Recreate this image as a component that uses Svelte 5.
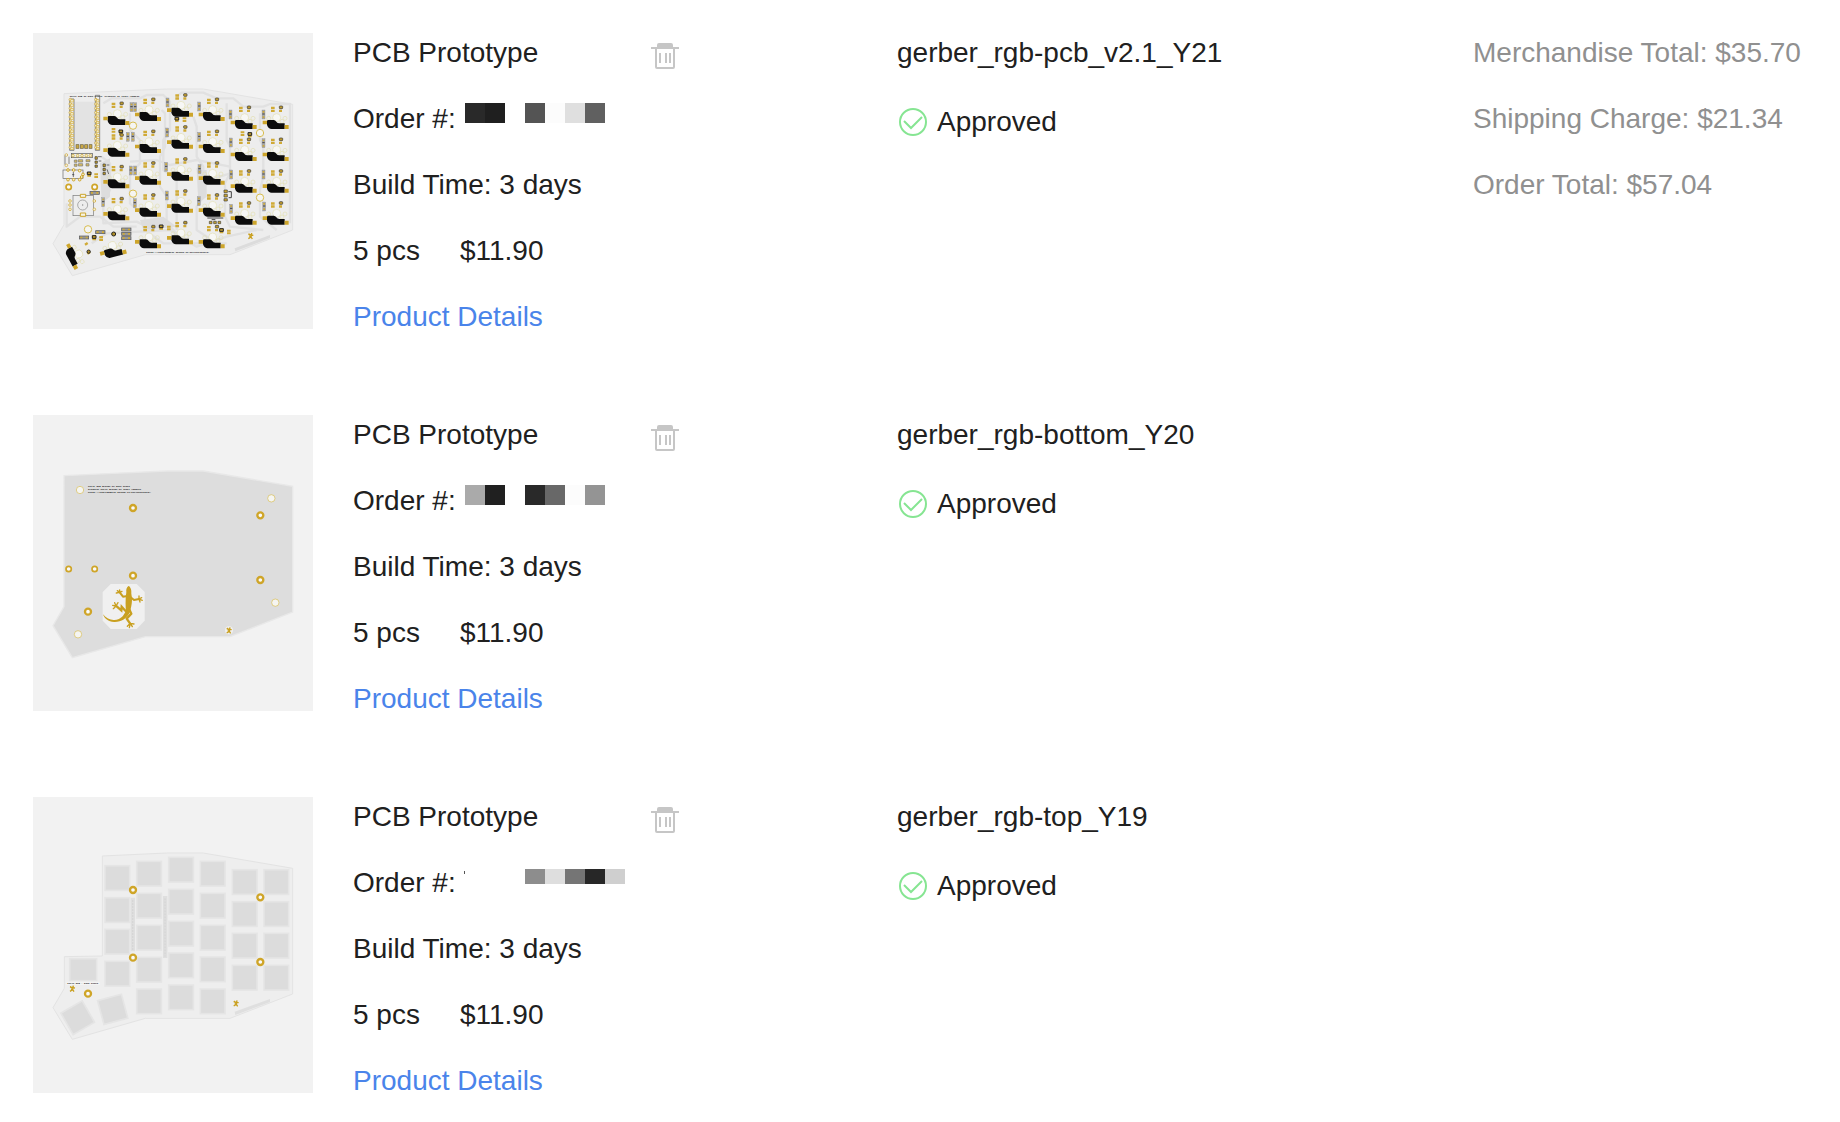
<script>
  const items = [
    {
      board: 'main',
      file: 'gerber_rgb-pcb_v2.1_Y21',
      mask: ['#292929', '#1f1f1f', '#ffffff', '#545454', '#fcfcfc', '#dfdfdf', '#606060'],
    },
    {
      board: 'bottom',
      file: 'gerber_rgb-bottom_Y20',
      mask: ['#aaaaaa', '#202020', '#ffffff', '#292929', '#686868', '#fcfcfc', '#949494'],
    },
    {
      board: 'top',
      file: 'gerber_rgb-top_Y19',
      short: true,
      mask: ['#ffffff', '#ffffff', '#ffffff', '#8d8d8d', '#dedede', '#757575', '#272727', '#cfcfcf'],
    },
  ];

  const totals = [
    ['Merchandise Total', '$35.70'],
    ['Shipping Charge', '$21.34'],
    ['Order Total', '$57.04'],
  ];

  const OUTLINE = 'M102 197L250 190L410 183H520L788 229V606L600 680H346L127 743L69 647L102 590Z';

  // Hot-swap sockets: one [x, y] per key, by column
  const sockets = [
    [233, [258, 353, 448, 544]],
    [328, [246, 342, 437, 533, 628]],
    [424, [233, 329, 425, 521, 616]],
    [519, [246, 342, 437, 533, 628]],
    [615, [270, 366, 461, 557]],
    [711, [270, 366, 461, 557]],
  ].flatMap(([x, ys]) => ys.map((y) => [x, y]));

  const keys = [
    [225, [227, 323, 418, 514]],
    [320, [214, 310, 406, 502, 597]],
    [416, [202, 298, 394, 489, 585]],
    [511, [214, 310, 406, 501, 597]],
    [607, [239, 335, 430, 526]],
    [702, [239, 335, 430, 526]],
  ].flatMap(([x, ys]) => ys.map((y) => [x, y]));

  // Vertical diode footprints
  const diodes = [
    [300, 218], [311, 218], [408, 204], [503, 216], [597, 240], [696, 240],
    [289, 307], [304, 307], [407, 294], [503, 307], [598, 324], [696, 326],
    [298, 408], [311, 408], [404, 397], [504, 404], [599, 420], [696, 420],
    [215, 503], [310, 506], [406, 483], [502, 500], [599, 523], [698, 516],
  ];
  const flatDiodes = [[180, 484], [197, 602], [148, 618], [275, 594], [275, 607], [275, 620]];
  const pads = [
    [267, 300], [245, 294], [435, 262], [458, 262], [654, 308], [632, 304],
    [172, 426], [193, 430], [187, 617], [208, 619], [388, 585], [411, 587],
    [569, 596], [591, 599],
  ];
  const pinRow = Array.from({ length: 12 }, (_, i) => 209 + i * 13);

  const traces = [
    'M440 200L455 188H520L560 205H610L640 230H700L720 222H780V580',
    'M220 220L245 205H330L350 195H400L420 215V300L400 330V420L440 450V600',
    'M300 250V300L330 330V400L300 430V520L345 560V600L400 640H590',
    'M395 240L405 250V350L390 380V470L410 500V580L440 610',
    'M490 260L500 290V380L520 410V500L500 530V600L560 640',
    'M590 220V330L600 350V430L585 460V560L600 590L700 600',
    'M690 250V330L700 350V440L690 480V560L740 600',
    'M215 380L240 400V480L220 510V580L320 575L370 600',
    'M110 520V590L150 560H210L250 590H320',
    'M500 415L540 450L600 430M300 395L380 390L420 405L500 390L600 410',
    'M185 640L230 610L420 600L500 650L590 620L680 600',
  ];
</script>

{#snippet ring(x, y, r = 9, w = 7)}
  <circle cx={x} cy={y} {r} fill="#fafafa" stroke="#cfa528" stroke-width={w} />
{/snippet}

{#snippet thinRing(x, y, w = 2)}
  <circle cx={x} cy={y} r="11" fill="#f5f5f2" stroke="#d8bd50" stroke-width={w} />
{/snippet}

{#snippet gecko()}
  <g fill="none" stroke="#c9a020" stroke-linecap="round" stroke-linejoin="round">
    <path d="M292 558L279 560L269 547" stroke-width="6" />
    <path d="M269 547L259 549M269 547L262 542M269 547L269 540M269 547L276 544" stroke-width="4" />
    <path d="M300 560L312 570L327 567" stroke-width="6" />
    <path d="M327 567L327 558M327 567L335 563M327 567L337 571M327 567L330 576" stroke-width="4" />
    <path d="M294 604L286 602L275 590L274 601L260 589" stroke-width="7" stroke-linejoin="miter" />
    <path d="M258 588L248 586M258 588L250 596M258 588L254 578M258 588L264 578" stroke-width="4" />
    <path d="M297 596L304 611L290 626L300 640" stroke-width="7" />
    <path d="M301 640L292 649M301 640L298 653M301 640L307 650M301 640L312 642" stroke-width="4" />
  </g>
  <path
    d="M296 528C301 530 305 540 304 546C303 550 306 558 306 570C306 584 302 596 300 606C290 626 273 637 252 636C235 635 223 626 219 613C229 626 241 631 254 630C270 629 279 621 287 604C288 596 286 584 287 570C287 558 289 550 289 545C288 537 292 529 296 528Z"
    fill="#c9a020"
  />
{/snippet}

{#snippet smallGecko(x, y)}
  <g transform="translate({x} {y})" fill="none" stroke="#c9a020" stroke-width="4">
    <path d="M3 -9L1 3L-7 8M-7 -5L2 -3L8 -2M-4 1L1 3L5 9M-6 -7L-2 -2" />
  </g>
{/snippet}

{#snippet socket()}
  <g fill="none" stroke="#e3dfb4" stroke-width="2">
    <circle cx="29" cy="-7" r="12" fill="#f7f7f5" />
    <circle cx="5" cy="-5" r="6" />
    <circle cx="54" cy="-5" r="6" />
    <circle cx="45" cy="4" r="6" />
  </g>
  <path d="M0 4Q0 0 4 0H20Q25 0 28 5Q31 10 37 10H53V27H14Q4 27 0 15Z" fill="#0c0c0c" />
  <path d="M-13 2H0V13H-13ZM53 15H65V27H53Z" fill="#cda52b" />
{/snippet}

{#snippet led()}
  <path d="M12 -40H23V-33H12ZM12 -31H23V-24H12ZM36 -31H45V-24H36Z" fill="#d0aa36" />
  <rect x="37" y="-42" width="10" height="8" rx="2" fill="#c09c30" stroke="#333" stroke-width="2" />
{/snippet}

{#snippet mainBoard()}
  <g transform="translate(-9 -9)">
    <path d={OUTLINE} transform="translate(0 -6)" fill="#ededed" stroke="#e3e3e3" stroke-width="3" />
    <g fill="none" stroke="#e1e1e1" stroke-width="7" stroke-linejoin="round">
      {#each traces as d}<path {d} />{/each}
    </g>
    <path d="M210 400L240 385V500L215 520ZM330 570L400 560L440 590L340 600ZM500 420H530V500L505 520Z" fill="#dddddd" />

    <text x="119" y="200" font-size="7" class="silk">Sofle RGB by Dane Evans, original by Josef Adamcik</text>

    <!-- controller header -->
    <path d="M134 215H196V342H134Z" fill="#e3e3e3" />
    <g fill="none" stroke="#555" stroke-width="2">
      <path d="M119 207H132V361H119ZM196 196H209V361H196Z" />
    </g>
    {#each pinRow as y}
      <circle cx="121" cy={y} r="4" fill="#f3efd8" stroke="#cda52b" stroke-width="2" />
      <rect x="122" y={y} width="8" height="7" fill="#f1e9c4" stroke="#d4b24a" stroke-width="2" />
      <circle cx="198" cy={y} r="4" fill="#f3efd8" stroke="#cda52b" stroke-width="2" />
      <rect x="199" y={y} width="8" height="7" fill="#f1e9c4" stroke="#d4b24a" stroke-width="2" />
    {/each}
    {#each [138, 151, 164, 177] as x}
      <rect {x} y="344" width="9" height="11" fill="#c9a743" stroke="#6e6444" stroke-width="2" />
    {/each}

    <!-- display and passives -->
    <rect x="124" y="370" width="63" height="13" fill="#eee" stroke="#555" stroke-width="2" />
    {#each [129, 143, 156, 169, 181] as x}
      <circle cx={x} cy="377" r="4" fill="#f2ecd0" stroke="#cda52b" stroke-width="2" />
    {/each}
    <path d="M105 376V404M117 380V402" stroke="#555" stroke-width="2" />
    <circle cx="109" cy="375" r="4" fill="#eee" stroke="#cda52b" stroke-width="2" />
    <circle cx="109" cy="406" r="4" fill="#eee" stroke="#cda52b" stroke-width="2" />
    <g fill="#d8bc62" stroke="#777" stroke-width="2">
      <path d="M133 390H141V397H133ZM133 402H141V409H133ZM145 389H158V396H145ZM145 401H158V408H145ZM168 389H180V395H168ZM168 401H177V408H168Z" />
    </g>
    <g fill="#cda52b" stroke="#333" stroke-width="2">
      <path d="M195 380H202V388H195ZM195 393H202V400H195ZM195 405H202V412H195ZM219 402H226V410H219ZM219 415H226V422H219ZM219 427H226V434H219Z" />
      <path d="M204 380H215M206 393H214M230 405H238M231 418L236 432" fill="none" />
    </g>
    <rect x="99" y="420" width="60" height="25" fill="#f0f0f0" stroke="#666" stroke-width="2" />
    {#each [[114, 420], [131, 420], [149, 422], [159, 433], [155, 441], [114, 449], [131, 449], [149, 449]] as [x, y]}
      <circle cx={x} cy={y} r="4" fill="#f5efcf" stroke="#cda52b" stroke-width="3" />
    {/each}
    <path d="M130 426V441M126 434H133" stroke="#333" stroke-width="2" />

    <!-- rotary encoder -->
    <rect x="129" y="496" width="61" height="61" fill="none" stroke="#777" stroke-width="2" />
    <circle cx="158" cy="525" r="15" fill="none" stroke="#888" stroke-width="2" />
    <circle cx="158" cy="525" r="2" fill="#888" />
    <path d="M151 493H167V502H151ZM151 549H167V559H151Z" fill="#f6f3e4" stroke="#cda52b" stroke-width="3" />
    {#each [[120, 513], [120, 525], [120, 538], [193, 513], [193, 538]] as [x, y]}
      <circle cx={x} cy={y} r="4" fill="#f3efd8" stroke="#cda52b" stroke-width="2" />
    {/each}
    {@render ring(116, 471, 8, 5)}
    {@render ring(194, 471, 8, 5)}

    {#each diodes as [x, y]}
      <rect {x} {y} width="9" height="27" fill="#aaa" stroke="#888" stroke-width="1" />
      <path d="M{x + 2} {y + 3}h5v5h-5zM{x + 2} {y + 19}h5v5h-5z" fill="#d0aa36" />
      <path d="M{x + 1} {y + 12}h7" stroke="#444" stroke-width="3" />
    {/each}
    {#each flatDiodes as [x, y]}
      <rect {x} {y} width="28" height="9" fill="#999" stroke="#555" stroke-width="2" />
      <path d="M{x + 3} {y + 2}h6v5h-6zM{x + 19} {y + 2}h6v5h-6z" fill="#d0aa36" />
    {/each}
    {#each pads as [x, y], i}
      <path d="M{x} {y}h11v6h-11zM{x} {y + 8}h11v6h-11z" fill="#d0aa36" />
      {#if i % 2 === 0}
        <path d="M{x} {y}h11v8h-11z" fill="#c09c30" stroke="#222" stroke-width="3" />
      {/if}
    {/each}
    {@render thinRing(309, 287, 3)}
    {@render thinRing(309, 491, 3)}
    {@render thinRing(690, 309, 3)}
    {@render thinRing(690, 503, 3)}
    {@render thinRing(174, 598, 3)}

    {#each sockets as [x, y]}
      <g transform="translate({x} {y})">
        {@render led()}
        {@render socket()}
      </g>
    {/each}
    <g transform="translate(221 661) rotate(-15)">{@render socket()}</g>
    <path d="M209 619h10v6h-10zM209 627h10v6h-10z" fill="#d0aa36" />
    <circle cx="251" cy="612" r="6" fill="#b08e28" stroke="#222" stroke-width="3" />
    <g transform="translate(126 650) rotate(61)">{@render socket()}</g>
    <path d="M163 641l8-5 4 6-8 5zM170 668l8-5 4 6-8 5z" fill="#d0aa36" />
    <circle cx="176" cy="665" r="5" fill="#b08e28" stroke="#222" stroke-width="3" />

    <g fill="#cda52b" stroke="#444" stroke-width="2">
      <path d="M582 480H592V488H582ZM582 493H592V501H582ZM582 506H592V513H582Z" />
      <path d="M538 574H546V581H538ZM551 574H559V581H551ZM564 574H572V581H564Z" />
    </g>
    <path d="M595 485H604V503H596M532 564H580M545 569H556" fill="none" stroke="#444" stroke-width="3" />
    {@render smallGecko(662, 618)}
    <path d="M614 655L720 615V624L616 664Z" fill="#dcdcdc" />
    <text x="349" y="669" font-size="7" class="silk">https://josefadamcik.github.io/SofleKeyboard/</text>
  </g>
{/snippet}

{#snippet bottomBoard()}
  <g transform="translate(-9 -15)">
    <path d={OUTLINE} fill="#dddddd" stroke="#e8e8e8" stroke-width="4" />
    <g font-size="7">
      <text x="174" y="231" class="silk">Sofle RGB design by Dane Evans</text>
      <text x="174" y="240" class="silk">Original Sofle design by Josef Adamcik</text>
      <text x="174" y="249" class="silk">https://josefadamcik.github.io/SofleKeyboard/</text>
    </g>
    {@render thinRing(150, 240)}
    {@render thinRing(724, 265)}
    {@render thinRing(736, 578)}
    {@render thinRing(144, 673)}
    {@render ring(309, 294)}
    {@render ring(691, 316)}
    {@render ring(309, 497)}
    {@render ring(691, 510)}
    {@render ring(174, 605)}
    {@render ring(116, 477, 8, 5)}
    {@render ring(194, 477, 8, 5)}
    <path d="M242 522H320L344 546V632L320 657H242L218 632V546Z" fill="#f0f0f0" />
    {@render gecko()}
    <circle cx="597" cy="661" r="12" fill="#f0f0f0" />
    {@render smallGecko(597, 661)}
  </g>
{/snippet}

{#snippet topBoard()}
  <g transform="translate(-9 -21)">
    <path
      d="M217 198L410 189H520L788 235V612L600 685H346L127 748L69 653L103 595V500L217 498Z"
      fill="#eeeeee"
      stroke="#e3e3e3"
      stroke-width="3"
    />
    <g fill="#dcdcdc" stroke="#e5e5e5" stroke-width="5">
      {#each keys as [x, y]}
        <rect {x} {y} width="74" height="74" />
      {/each}
      <rect x="119" y="506" width="81" height="66" />
      <rect x="106" y="646" width="74" height="74" transform="rotate(-30 143 683)" />
      <rect x="211" y="621" width="74" height="74" transform="rotate(-15 248 658)" />
    </g>
    <path d="M302 323H315V484H302ZM399 318H412V504H399ZM614 665L720 627V636L616 675Z" fill="#dfdfdf" />
    <path d="M308 330V480M405 325V500" stroke="#d6d6d6" stroke-width="4" stroke-dasharray="6 3" />
    {@render ring(309, 300)}
    {@render ring(309, 503)}
    {@render ring(691, 322)}
    {@render ring(691, 516)}
    {@render ring(174, 611)}
    <rect x="109" y="575" width="100" height="10" fill="#f4f4f4" />
    <text x="112" y="583" font-size="7" class="silk">Sofle RGB - Dane Evans</text>
    {@render smallGecko(127, 596)}
    {@render smallGecko(618, 640)}
  </g>
{/snippet}

<main class="order">
  <ul class="items">
    {#each items as item}
      <li class="item">
        <svg class="preview" viewBox="0 0 840 888" role="img" aria-label="Board preview">
          {#if item.board === 'main'}
            {@render mainBoard()}
          {:else if item.board === 'bottom'}
            {@render bottomBoard()}
          {:else}
            {@render topBoard()}
          {/if}
        </svg>

        <div class="info">
          <div class="lines">
            <p>PCB Prototype</p>
            <p class="number">
              Order #:
              <span class="mask" class:short={item.short}>
                {#each item.mask as color}
                  <i style:background-color={color}></i>
                {/each}
              </span>
            </p>
            <p>Build Time: 3 days</p>
            <p class="price"><span>5 pcs</span><span>$11.90</span></p>
            <p><a href="#details">Product Details</a></p>
          </div>
          <button class="remove" type="button" aria-label="Remove item">
            <svg viewBox="0 0 28 26" width="28" height="26">
              <path d="M6 4V2Q6 0 8 0H20Q22 0 22 2V4H28V6H0V4Z" fill="#c6c6c6" />
              <path d="M5 5V24Q5 25 6 25H22Q23 25 23 24V5" fill="none" stroke="#c6c6c6" stroke-width="2" />
              <path d="M9 10V20M15 10V20M19 10V20" stroke="#c6c6c6" stroke-width="2" />
            </svg>
          </button>
        </div>

        <div class="review">
          <p>{item.file}</p>
          <p class="status">
            <svg viewBox="0 0 28 28" width="28" height="28" fill="none" stroke="#86e592" stroke-width="2">
              <circle cx="14" cy="14" r="13" />
              <path d="M5 13L12 20L23 9" />
            </svg>
            Approved
          </p>
        </div>
      </li>
    {/each}
  </ul>

  <aside class="totals">
    {#each totals as [label, amount]}
      <p>{label}: {amount}</p>
    {/each}
  </aside>
</main>

<style>
  :global(body) {
    background: #fff;
  }

  .order {
    display: grid;
    grid-template-columns: minmax(0, 1fr) 334px;
    padding: 33px 33px 21px;
    color: #202020;
    font: 28px/40px 'Liberation Sans', Arial, sans-serif;
  }

  p {
    margin: 0;
    white-space: nowrap;
  }

  .items {
    display: flex;
    flex-direction: column;
    gap: 78px;
    margin: 0;
    padding: 0;
    list-style: none;
  }

  .item {
    display: grid;
    grid-template-columns: 320px minmax(0, 17fr) minmax(0, 18fr);
  }

  .preview {
    width: 280px;
    height: 296px;
    background: #f2f2f2;
  }

  .silk {
    fill: #111;
    font-family: 'Liberation Mono', monospace;
    font-weight: 700;
  }

  .info {
    display: flex;
    align-items: flex-start;
    justify-content: space-between;
    max-width: 326px;
  }

  .lines,
  .totals {
    display: flex;
    flex-direction: column;
    gap: 26px;
  }

  .number {
    display: flex;
    gap: 9px;
  }

  .mask {
    position: relative;
    display: flex;
    padding-top: 4px;
  }

  .mask i {
    width: 20px;
    height: 20px;
  }

  .mask.short {
    padding-top: 6px;
  }

  .mask.short i {
    height: 15px;
  }

  .mask.short::before {
    position: absolute;
    top: 8px;
    left: -1px;
    width: 1px;
    height: 3px;
    background: #555;
    content: '';
  }

  .price {
    display: flex;
    gap: 40px;
  }

  a {
    color: #4a84ea;
    text-decoration: none;
  }

  .remove {
    display: flex;
    margin: 10px 0 0;
    padding: 0;
    border: 0;
    background: none;
    cursor: pointer;
  }

  .review {
    display: flex;
    flex-direction: column;
    gap: 29px;
  }

  .status {
    display: flex;
    align-items: center;
    gap: 10px;
    padding-left: 2px;
  }

  .totals {
    color: #909090;
  }
</style>
